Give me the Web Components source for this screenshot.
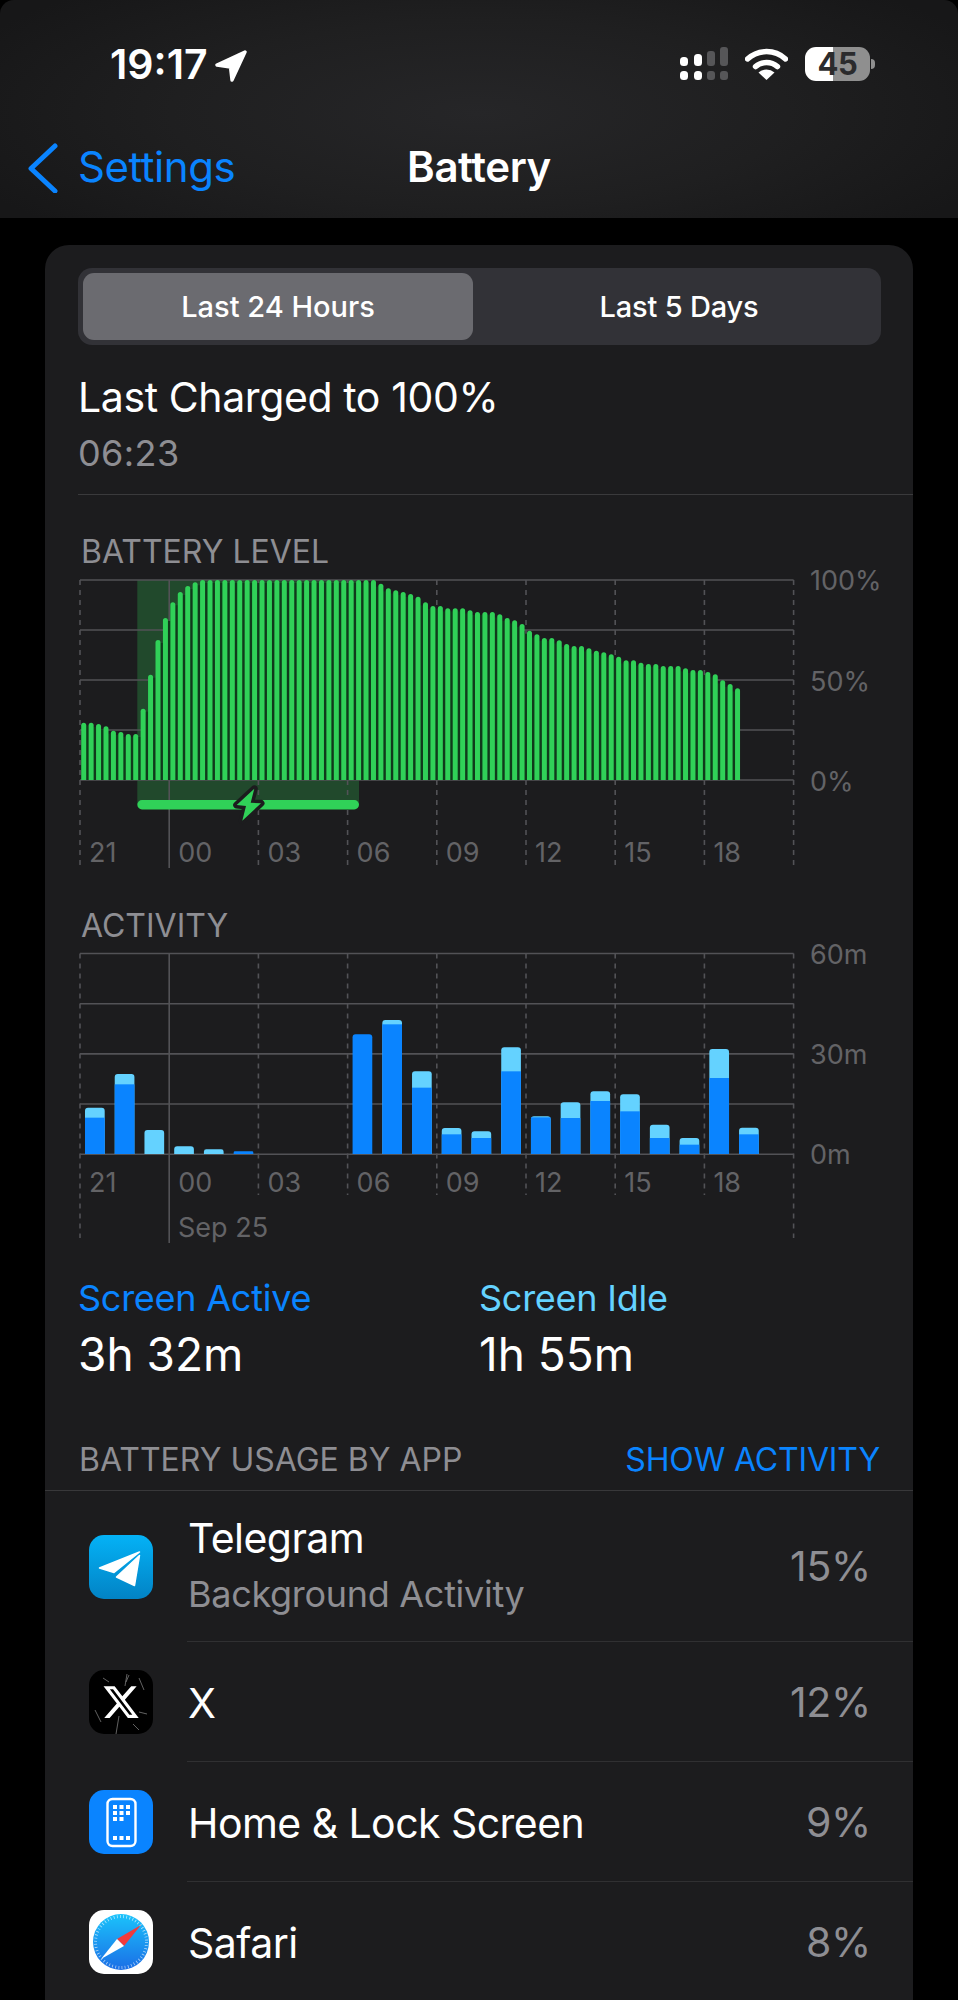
<!DOCTYPE html>
<html>
<head>
<meta charset="utf-8">
<title>Battery</title>
<style>
html,body{margin:0;padding:0;background:#000;height:2000px;overflow:hidden;}
body{font-family:Inter,"Liberation Sans",sans-serif;color:#fff;}
</style>
</head>
<body>
<page-header></page-header>
<battery-card>
  <segment-control></segment-control>
  <charge-summary></charge-summary>
  <level-chart></level-chart>
  <activity-chart></activity-chart>
  <screen-stats></screen-stats>
  <usage-head></usage-head>
  <app-row name="Telegram" sub="Background Activity" pct="15%"><app-icon kind="telegram"></app-icon></app-row>
  <app-row name="X" pct="12%"><app-icon kind="x"></app-icon></app-row>
  <app-row name="Home &amp; Lock Screen" pct="9%"><app-icon kind="home"></app-icon></app-row>
  <app-row name="Safari" pct="8%"><app-icon kind="safari"></app-icon></app-row>
</battery-card>

<script>
const GREEN = "#30d158";
const BLUE = "#0a84ff";
const CYAN = "#64d2ff";
const LINE = "#525256";
const AXIS = "#636366";
const GRID_X = [80,169.2,258.4,347.6,436.8,526,615.2,704.4,793.6];
const HOURS = ["21","00","03","06","09","12","15","18"];

class PageHeader extends HTMLElement{
    constructor(){
        super();
        this.attachShadow({ mode: "open" });
        this.shadowRoot.innerHTML = `
        <style>
            :host{
                display:flex;
                flex-direction:column;
                height:218px;
                box-sizing:border-box;
                padding-top:40px;
                border-radius:14px 14px 0 0;
                background:radial-gradient(ellipse 560px 170px at 50% 52%,#262628 0%,#1f1f20 55%,#171718 100%);
            }
            .status{
                display:flex;
                justify-content:space-between;
                align-items:flex-start;
                padding:0 83px 0 110px;
                height:48px;
            }
            .time{
                display:flex;
                font-size:41px;
                line-height:48px;
                font-weight:600;
            }
            .time svg{margin:10px 0 0 7px;}
            .indicators{display:flex;align-items:flex-start;margin-top:7px;}
            .wifi{margin:1px 17px 0 17px;}
            .batt{
                width:65px;
                height:34px;
                border-radius:11px;
                background:linear-gradient(90deg,#fff 43%,#8f8f8f 43%);
                color:#2b2b2d;
                font-size:31px;
                font-weight:700;
                line-height:34px;
                letter-spacing:-.5px;
                text-align:center;
            }
            .nub{width:4px;height:10px;margin-top:12px;margin-left:1px;background:#8f8f8f;border-radius:0 5px 5px 0;}
            .nav{
                display:grid;
                grid-template-columns:1fr auto 1fr;
                margin-top:54px;
                height:50px;
                line-height:50px;
                font-size:42px;
            }
            .back{display:flex;align-items:flex-start;padding-left:27px;color:${BLUE};letter-spacing:-.45px;}
            .back svg{margin:1px 19px 0 0;}
            .title{font-weight:600;letter-spacing:-.4px;}
        </style>
        <div class="status">
            <div class="time">19:17
                <svg width="32" height="32" viewBox="0 0 32 32"><path d="M30 2 L2 15 L15.5 17 L17 30 Z" fill="#fff" stroke="#fff" stroke-width="3.4" stroke-linejoin="round"/></svg>
            </div>
            <div class="indicators">
                <svg width="48" height="33" viewBox="0 0 48 33">
                    <rect x="0" y="10" width="8" height="9" rx="3.5" fill="#fff"/>
                    <rect x="14" y="7" width="8" height="12" rx="3.5" fill="#fff"/>
                    <rect x="27" y="4" width="8" height="15" rx="3" fill="#565658"/>
                    <rect x="40" y="0" width="8" height="19" rx="3" fill="#565658"/>
                    <rect x="0" y="24" width="8" height="9" rx="3.5" fill="#fff"/>
                    <rect x="14" y="24" width="8" height="9" rx="3.5" fill="#fff"/>
                    <rect x="27" y="24" width="8" height="9" rx="3" fill="#565658"/>
                    <rect x="40" y="24" width="8" height="9" rx="3" fill="#565658"/>
                </svg>
                <svg class="wifi" width="43" height="32" viewBox="0 0 43 32" fill="none">
                    <path d="M2.5 11 A28 28 0 0 1 40.5 11" stroke="#fff" stroke-width="5.4" stroke-linecap="round"/>
                    <path d="M10.5 18.6 A17 17 0 0 1 32.5 18.6" stroke="#fff" stroke-width="5.4" stroke-linecap="round"/>
                    <path d="M21.5 32 L13.5 24.6 A12 12 0 0 1 29.5 24.6 Z" fill="#fff"/>
                </svg>
                <div class="batt">45</div>
                <div class="nub"></div>
            </div>
        </div>
        <div class="nav">
            <div class="back">
                <svg width="32" height="50" viewBox="0 0 32 50" fill="none"><path d="M28 3 L4 25.5 L28 48" stroke="${BLUE}" stroke-width="5" stroke-linecap="round" stroke-linejoin="round"/></svg>
                Settings
            </div>
            <div class="title">Battery</div>
            <div></div>
        </div>
        `
    }
}
customElements.define("page-header",PageHeader);

class BatteryCard extends HTMLElement{
    constructor(){
        super();
        this.attachShadow({ mode: "open" });
        this.shadowRoot.innerHTML = `
        <style>
            :host{
                display:block;
                margin:27px 45px 0 45px;
                padding:23px 0 0 33px;
                background:#1c1c1e;
                border-radius:24px 24px 0 0;
            }
        </style>
        <slot></slot>
        `
    }
}
customElements.define("battery-card",BatteryCard);

class SegmentControl extends HTMLElement{
    constructor(){
        super();
        this.attachShadow({ mode: "open" });
        this.shadowRoot.innerHTML = `
        <style>
            :host{
                display:grid;
                grid-template-columns:390px 1fr;
                height:77px;
                box-sizing:border-box;
                width:803px;
                padding:5px;
                background:#323237;
                border-radius:14px;
                font-size:29px;
                font-weight:500;
                line-height:67px;
                text-align:center;
            }
            .on{background:#6b6b70;border-radius:11px;}
            .off{padding-left:9px;letter-spacing:-.2px;}
        </style>
        <div class="on">Last 24 Hours</div>
        <div class="off">Last 5 Days</div>
        `
    }
}
customElements.define("segment-control",SegmentControl);

class ChargeSummary extends HTMLElement{
    constructor(){
        super();
        this.attachShadow({ mode: "open" });
        this.shadowRoot.innerHTML = `
        <style>
            :host{
                display:block;
                padding:27px 0 18px 0;
                border-bottom:1.5px solid #3a3a3c;
            }
            .big{font-size:41px;line-height:50px;letter-spacing:-.4px;}
            .time{font-size:36px;line-height:46px;margin-top:8px;color:#8e8e93;letter-spacing:.4px;}
        </style>
        <div class="big">Last Charged to 100%</div>
        <div class="time">06:23</div>
        `
    }
}
customElements.define("charge-summary",ChargeSummary);

// lignes communes aux deux graphiques
function gridSvg(ys,bottoms){
    let s = "";
    ys.forEach(y=>{
        s += `<line x1="80" x2="793.6" y1="${y}" y2="${y}" stroke="${LINE}" stroke-width="1.6"/>`;
    });
    GRID_X.forEach((x,i)=>{
        let dash = i==1 ? "" : `stroke-dasharray="5 5"`;
        s += `<line x1="${x}" x2="${x}" y1="${ys[0]}" y2="${bottoms[i]}" stroke="${LINE}" stroke-width="1.6" ${dash}/>`;
    });
    return s;
}
function axisText(hourY,yLabels){
    let s = "";
    HOURS.forEach((h,i)=>{
        s += `<text x="${GRID_X[i]+9}" y="${hourY}" class="axis">${h}</text>`;
    });
    yLabels.forEach(l=>{
        s += `<text x="810" y="${l[1]}" class="axis">${l[0]}</text>`;
    });
    return s;
}
const CHART_STYLE = `
    :host{display:block;}
    .head{font-size:32px;line-height:38px;margin:37px 0 0 3px;color:#8e8e93;}
    svg{display:block;margin-top:-12px;}
    .axis{font:400 27px Inter,"Liberation Sans",sans-serif;fill:${AXIS};}
`;

class LevelChart extends HTMLElement{
    constructor(){
        super();
        this.attachShadow({ mode: "open" });
        // sommets des barres, lus sur la capture (x3)
        let tops = [608,608,612,619,632,636,642,642,566,464,360,294,247,216,198,187];
        for(let i=0;i<24;i++) tops.push(180);
        tops.push(191,205,211,216,222,230,247,258,258,265,265,265,271,276,276,276,283,294,301,312,332,343,354,354,361,372,378,378,385,392,397,403,410,421,421,428,432,432,438,438,438,445,450,450,456,463,481,492,505);
        let gaps = "", bars = "";
        tops.forEach((z,i)=>{
            let h = (780-z)/3;
            let x = 83.7+i*7.43;
            if(i<tops.length-1){
                let g = Math.min(h,(780-tops[i+1])/3);
                gaps += `<rect x="${x}" y="${780-g+3}" width="7.43" height="${g-3}"/>`;
            }
            bars += `<path d="M${x-2.5} 780 V${780-h+2.5} a2.5 2.5 0 0 1 5 0 V780 Z"/>`;
        });
        let bottoms = [865,868,865,865,865,865,865,865,865];
        this.shadowRoot.innerHTML = `
        <style>${CHART_STYLE} .head{position:relative;top:1px;}</style>
        <div class="head">BATTERY LEVEL</div>
        <svg width="835" height="312" viewBox="78 558 835 312">
            <rect x="137.3" y="580" width="221.7" height="224" fill="${GREEN}" fill-opacity=".25"/>
            ${gridSvg([580,630,680,730,780],bottoms)}
            <g fill="#103a1b">${gaps}</g>
            <g fill="${GREEN}">${bars}</g>
            <rect x="137.3" y="800" width="221.7" height="9.5" rx="4.7" fill="${GREEN}"/>
            <path d="M254.3 788.7 L236.7 805 L246 806 L242.3 820.7 L261 803.3 L250.7 802.7 Z" fill="${GREEN}" stroke="#1c1c1e" stroke-width="7" stroke-linejoin="round" paint-order="stroke"/>
            ${axisText(862,[["100%",590],["50%",691],["0%",791]])}
        </svg>
        `
    }
}
customElements.define("level-chart",LevelChart);

class ActivityChart extends HTMLElement{
    constructor(){
        super();
        this.attachShadow({ mode: "open" });
        // [haut, limite bleu fonce] lus sur la capture (x3), base 762
        let data = [[623,653],[522,553],[690,762],[739,762],[748,762],[754,754],null,null,null,[403,403],[360,373],[514,563],[684,703],[694,714],[442,514],[649,652],[607,654],[574,603],[583,634],[674,714],[714,734],[447,534],[683,703]];
        let bars = "";
        data.forEach((d,i)=>{
            if(!d) return;
            let x = 85+i*29.73;
            let top = 900+d[0]/3, split = 900+d[1]/3;
            let r = Math.min(3,(1154-top)/2);
            let shape = `M${x} 1154 V${top+r} a${r} ${r} 0 0 1 ${r} ${-r} H${x+19.7-r} a${r} ${r} 0 0 1 ${r} ${r} V1154 Z`;
            if(split<=top){
                bars += `<path d="${shape}" fill="${BLUE}"/>`;
                return;
            }
            bars += `<path d="${shape}" fill="${CYAN}"/>`;
            if(split<1154) bars += `<rect x="${x}" y="${split}" width="19.7" height="${1154-split}" fill="${BLUE}"/>`;
        });
        let bottoms = [1238,1243,1195,1195,1195,1195,1195,1195,1238];
        this.shadowRoot.innerHTML = `
        <style>${CHART_STYLE}</style>
        <div class="head">ACTIVITY</div>
        <svg width="835" height="312" viewBox="78 933 835 312">
            ${gridSvg([953.5,1003.7,1053.9,1104,1154.2],bottoms)}
            ${bars}
            ${axisText(1192,[["60m",964],["30m",1064],["0m",1164]])}
            <text x="178" y="1237" class="axis">Sep 25</text>
        </svg>
        `
    }
}
customElements.define("activity-chart",ActivityChart);

class ScreenStats extends HTMLElement{
    constructor(){
        super();
        this.attachShadow({ mode: "open" });
        this.shadowRoot.innerHTML = `
        <style>
            :host{
                display:grid;
                grid-template-columns:401px 1fr;
                margin:30px 0 0 0;
            }
            .k{font-size:36px;line-height:46px;letter-spacing:-.25px;}
            .v{font-size:46px;line-height:56px;margin-top:5px;letter-spacing:0;}
        </style>
        <div><div class="k" style="color:${BLUE}">Screen Active</div><div class="v">3h 32m</div></div>
        <div><div class="k" style="color:${CYAN}">Screen Idle</div><div class="v">1h 55m</div></div>
        `
    }
}
customElements.define("screen-stats",ScreenStats);

class UsageHead extends HTMLElement{
    constructor(){
        super();
        this.attachShadow({ mode: "open" });
        this.shadowRoot.innerHTML = `
        <style>
            :host{
                display:flex;
                justify-content:space-between;
                margin:59px 0 0 -33px;
                padding:0 33px 11px 34px;
                border-bottom:1.5px solid #38383a;
                font-size:32px;
                line-height:38px;
                color:#8e8e93;
            }
            .act{color:${BLUE};letter-spacing:-.15px;}
        </style>
        <div>BATTERY USAGE BY APP</div>
        <div class="act">SHOW ACTIVITY</div>
        `
    }
}
customElements.define("usage-head",UsageHead);

class AppRow extends HTMLElement{
    constructor(){
        super();
        this.attachShadow({ mode: "open" });
    }
    connectedCallback(){
        let sub = this.getAttribute("sub");
        this.shadowRoot.innerHTML = `
        <style>
            :host{
                display:flex;
                align-items:center;
                margin-left:11px;
                height:${sub ? 151 : 120}px;
            }
            .body{
                flex:1;
                height:100%;
                display:flex;
                align-items:center;
                justify-content:space-between;
                margin-left:34px;
                padding:0 42px 0 0;
                box-sizing:border-box;
                border-bottom:1.5px solid #303032;
            }
            .name{font-size:41px;line-height:50px;margin:${sub ? 0 : 2}px 0 0 1px;letter-spacing:-.55px;}
            .sub{font-size:36px;line-height:46px;margin:8px 0 2px 1px;color:#8e8e93;letter-spacing:-.3px;}
            .pct{font-size:41px;color:#8e8e93;letter-spacing:-.3px;}
        </style>
        <slot></slot>
        <div class="body">
            <div>
                <div class="name">${this.getAttribute("name").replace("&","&amp;")}</div>
                ${sub ? `<div class="sub">${sub}</div>` : ""}
            </div>
            <div class="pct">${this.getAttribute("pct")}</div>
        </div>
        `
    }
}
customElements.define("app-row",AppRow);

class AppIcon extends HTMLElement{
    constructor(){
        super();
        this.attachShadow({ mode: "open" });
    }
    connectedCallback(){
        const kinds = {
            telegram:`
                <defs><linearGradient id="t" x1="0" y1="0" x2="0" y2="1"><stop offset="0" stop-color="#04b2f6"/><stop offset="1" stop-color="#0283c5"/></linearGradient></defs>
                <rect width="64" height="64" rx="15" fill="url(#t)"/>
                <path d="M10.5 33 L50.5 17 L25 37.5 Z" fill="#fff" stroke="#fff" stroke-width="1.5" stroke-linejoin="round"/>
                <path d="M27.5 42 L50.5 20.5 L45.5 50.5 Z" fill="#fff" stroke="#fff" stroke-width="1.5" stroke-linejoin="round"/>`,
            x:`
                <rect width="64" height="64" rx="15" fill="#000"/>
                <g stroke="#8d8d8d" stroke-width=".7" fill="none">
                    <path d="M38 4 L36 16 M40 5 L37 12 M30 46 L27 64 M14 8 L20 12 M50 42 L58 44 M6 40 L12 52 M50 8 L55 20 M44 54 L50 60"/>
                </g>
                <g transform="translate(12.5 12.5) scale(1.63)"><path d="M18.244 2.25h3.308l-7.227 8.26 8.502 11.24H16.17l-5.214-6.817L4.99 21.75H1.68l7.73-8.835L1.254 2.25H8.08l4.713 6.231zm-1.161 17.52h1.833L7.084 4.126H5.117z" fill="#fff"/></g>`,
            home:`
                <rect width="64" height="64" rx="15" fill="${BLUE}"/>
                <rect x="18.5" y="9" width="28" height="47" rx="5" fill="none" stroke="#fff" stroke-width="2.4"/>
                <g fill="#fff">
                    <rect x="24" y="15" width="4" height="4"/><rect x="30.5" y="15" width="4" height="4"/><rect x="37" y="15" width="4" height="4"/>
                    <rect x="24" y="21" width="4" height="4"/><rect x="30.5" y="21" width="4" height="4"/><rect x="37" y="21" width="4" height="4"/>
                    <rect x="24" y="27" width="4" height="4"/><rect x="30.5" y="27" width="4" height="4"/>
                    <rect x="24" y="46" width="4" height="4"/><rect x="30.5" y="46" width="4" height="4"/><rect x="37" y="46" width="4" height="4"/>
                </g>`,
            safari:`
                <defs><linearGradient id="s" x1="0" y1="0" x2="0" y2="1"><stop offset="0" stop-color="#1bc3fb"/><stop offset="1" stop-color="#1b6ee6"/></linearGradient></defs>
                <rect width="64" height="64" rx="15" fill="#fff"/>
                <circle cx="32" cy="32" r="28" fill="url(#s)"/>
                <circle cx="32" cy="32" r="25.5" fill="none" stroke="#fff" stroke-opacity=".65" stroke-width="3" stroke-dasharray=".8 2.4"/>
                <path d="M52 15 L28 29 L35 36 Z" fill="#f23a3c"/>
                <path d="M12 49 L28 29 L35 36 Z" fill="#fff"/>`
        };
        this.shadowRoot.innerHTML = `
        <style>
            :host{display:block;width:64px;height:64px;flex:none;}
            svg{display:block;}
        </style>
        <svg width="64" height="64" viewBox="0 0 64 64">${kinds[this.getAttribute("kind")]}</svg>
        `
    }
}
customElements.define("app-icon",AppIcon);
</script>
</body>
</html>
